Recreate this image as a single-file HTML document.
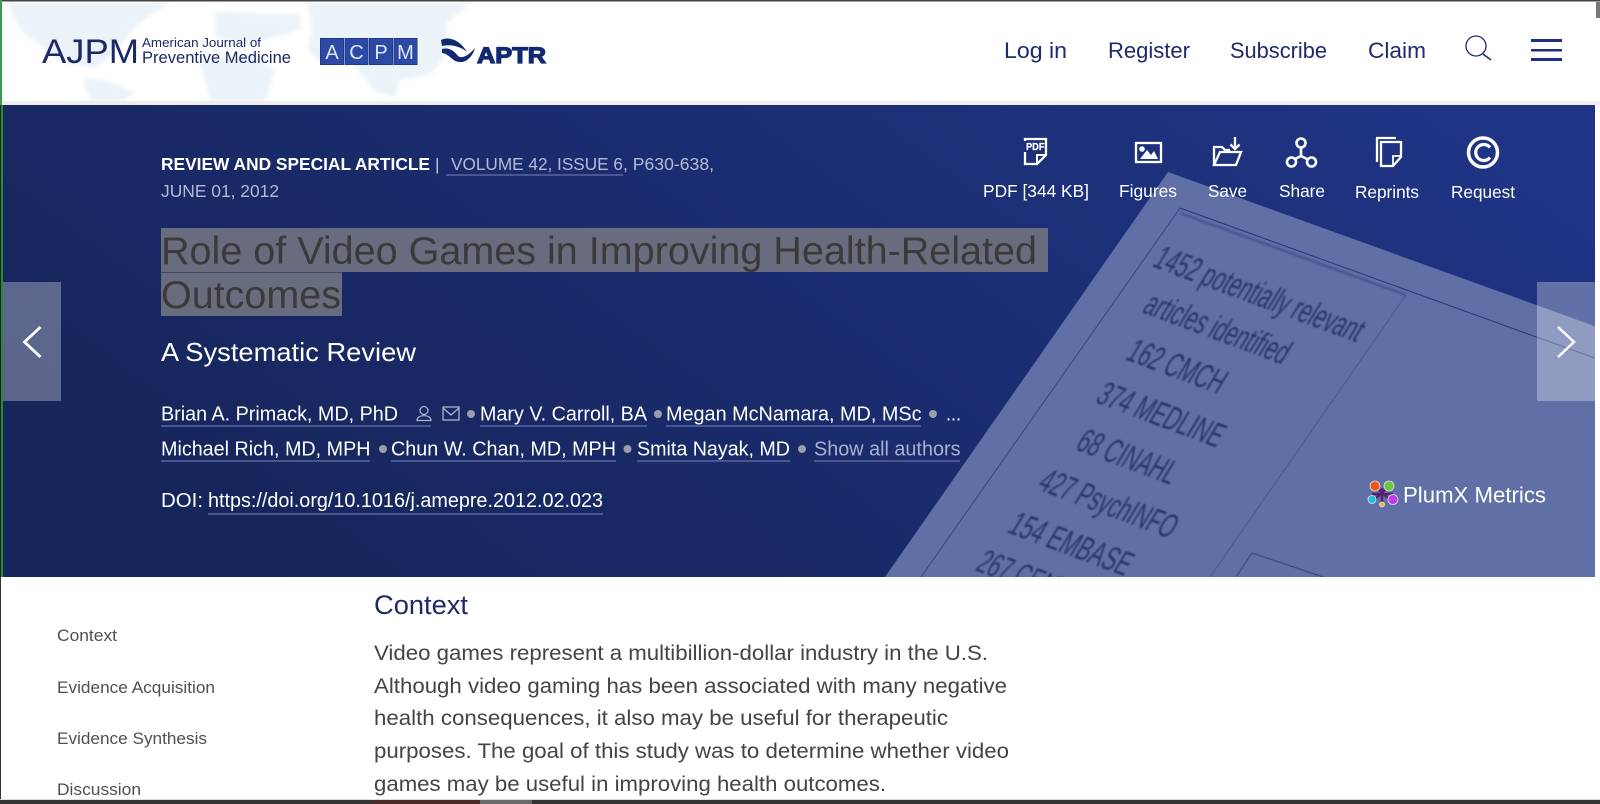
<!DOCTYPE html>
<html lang="en"><head><meta charset="utf-8"><title>Role of Video Games in Improving Health-Related Outcomes</title>
<style>html,body{margin:0;padding:0;background:#fff;width:1600px;height:804px;overflow:hidden}svg{display:block}text{font-family:"Liberation Sans",Arial,sans-serif;white-space:pre}</style></head><body>
<svg xmlns="http://www.w3.org/2000/svg" width="1600" height="804" viewBox="0 0 1600 804">
<defs>
<linearGradient id="hg" x1="0" y1="0.6" x2="1" y2="0.2"><stop offset="0" stop-color="#16255a"/><stop offset="1" stop-color="#1f3485"/></linearGradient>
<clipPath id="hc"><rect x="3" y="105" width="1592" height="472"/></clipPath>
<filter id="bl" x="-10%" y="-50%" width="120%" height="200%"><feGaussianBlur stdDeviation="0.9"/></filter>
<filter id="mb" x="-5%" y="-5%" width="110%" height="110%"><feGaussianBlur stdDeviation="2"/></filter>
</defs>
<rect width="1600" height="804" fill="#fff"/>
<!-- map -->
<g fill="#ebf3f8" filter="url(#mb)">
<path d="M8,3H170L150,15L135,28L120,45L105,60L95,68L85,66L60,62L40,45L25,35L12,15Z"/>
<path d="M82,78L105,80L135,92L125,101H90Z"/>
<path d="M215,12L300,14V30L265,40L240,42L215,38Z"/>
<path d="M200,60L250,55L275,70L265,101H210Z"/>
<path d="M307,3H470L445,25L450,50L430,75L400,80L395,97L375,92L350,60L325,66L307,50L312,30Z"/>
</g>
<rect x="0" y="0" width="1600" height="1.500" fill="#444"/>
<rect x="0" y="101" width="1600" height="4" fill="#eeeeee"/>
<!-- logo -->
<text x="42" y="63" font-size="34" fill="#1b2a66" textLength="97" lengthAdjust="spacingAndGlyphs">AJPM</text>
<text x="142" y="47" font-size="13" fill="#1b2a66" textLength="119" lengthAdjust="spacingAndGlyphs">American Journal of</text>
<text x="142" y="63" font-size="17" fill="#1b2a66" textLength="149" lengthAdjust="spacingAndGlyphs">Preventive Medicine</text>
<g fill="#2c4aa5" stroke="#1f3a8c" stroke-width="1">
<rect x="320.500" y="38.500" width="23" height="26"/><rect x="345" y="38.500" width="23" height="26"/><rect x="369.500" y="38.500" width="23" height="26"/><rect x="394" y="38.500" width="23" height="26"/></g>
<g fill="#dfe6f5" font-size="20" text-anchor="middle"><text x="332" y="59">A</text><text x="356.500" y="59">C</text><text x="381" y="59">P</text><text x="405.500" y="59">M</text></g>
<path d="M441,40C449,36 460,40 467,52C460,46 450,44 442,46Z" fill="#10296f"/>
<path d="M442,49C450,47 455,52 458,56C462,59 468,56 475,48C473,56 466,63 460,62C452,62 450,54 442,53Z" fill="#10296f"/>
<text x="477" y="63" font-size="22" font-weight="bold" fill="#10296f" stroke="#10296f" stroke-width="1.200" textLength="69" lengthAdjust="spacingAndGlyphs">APTR</text>
<!-- nav -->
<g font-size="22.500" fill="#1d2a6b">
<text x="1004" y="58" textLength="63" lengthAdjust="spacingAndGlyphs">Log in</text>
<text x="1108" y="58" textLength="82" lengthAdjust="spacingAndGlyphs">Register</text>
<text x="1230" y="58" textLength="97" lengthAdjust="spacingAndGlyphs">Subscribe</text>
<text x="1368" y="58" textLength="58" lengthAdjust="spacingAndGlyphs">Claim</text>
</g>
<circle cx="1476" cy="46" r="10" fill="none" stroke="#1d2a6b" stroke-width="1.300"/>
<path d="M1483,54L1491,60" stroke="#1d2a6b" stroke-width="1.500"/>
<g fill="#1d2f7e"><rect x="1531" y="39" width="31" height="3"/><rect x="1531" y="49" width="31" height="2.500"/><rect x="1531" y="58" width="31" height="3"/></g>
<!-- hero -->
<rect x="3" y="105" width="1592" height="472" fill="url(#hg)"/>
<g clip-path="url(#hc)">
<path d="M1168,172L1600,328V577H885Z" fill="#6070a6"/>
<path d="M1180,208L1600,360" stroke="#24367f" stroke-width="1" fill="none"/>
<path d="M1180,208L921,577" stroke="#34458a" stroke-width="1" fill="none"/>
<path d="M1180,213L1406,295" stroke="#3a4a88" stroke-width="3" fill="none" opacity=".6" filter="url(#bl)"/>
<path d="M1406,295L1210,577" stroke="#4c5c96" stroke-width="1.200" fill="none"/>
<path d="M1236,577L1252,553L1323,577" stroke="#3a4a88" stroke-width="1.200" fill="none"/>
<g fill="#27356c" font-size="37" filter="url(#bl)">
<text transform="matrix(.94,.35,-.5,.82,1151,266)" textLength="218" lengthAdjust="spacingAndGlyphs">1452 potentially relevant</text>
<text transform="matrix(.94,.35,-.5,.82,1141,312)" textLength="150" lengthAdjust="spacingAndGlyphs">articles identified</text>
<text transform="matrix(.94,.35,-.5,.82,1124,359)" textLength="100" lengthAdjust="spacingAndGlyphs">162 CMCH</text>
<text transform="matrix(.94,.35,-.5,.82,1094,402)" textLength="130" lengthAdjust="spacingAndGlyphs">374 MEDLINE</text>
<text transform="matrix(.94,.35,-.5,.82,1074,449)" textLength="102" lengthAdjust="spacingAndGlyphs">68 CINAHL</text>
<text transform="matrix(.94,.35,-.5,.82,1036,489)" textLength="142" lengthAdjust="spacingAndGlyphs">427 PsychINFO</text>
<text transform="matrix(.94,.35,-.5,.82,1006,532)" textLength="126" lengthAdjust="spacingAndGlyphs">154 EMBASE</text>
<text transform="matrix(.94,.35,-.5,.82,974,570)" textLength="130" lengthAdjust="spacingAndGlyphs">267 CENTRAL</text>
</g>
</g>
<rect x="3" y="282" width="58" height="119" fill="#fff" opacity=".3"/>
<rect x="1537" y="282" width="58" height="119" fill="#fff" opacity=".3"/>
<path d="M40.500,327L24.500,342L40.500,357" fill="none" stroke="#fff" stroke-width="2.800"/>
<path d="M1558,327L1574,342L1558,357" fill="none" stroke="#fff" stroke-width="2.500"/>
<!-- meta -->
<text x="161" y="170" font-size="17.500" font-weight="bold" fill="#fff" textLength="269" lengthAdjust="spacingAndGlyphs">REVIEW AND SPECIAL ARTICLE</text>
<text x="435" y="170" font-size="17" fill="#c8cee2">|</text>
<text x="451" y="170" font-size="17.500" fill="#b3bad6" textLength="172" lengthAdjust="spacingAndGlyphs">VOLUME 42, ISSUE 6</text>
<text x="623" y="170" font-size="17.500" fill="#b3bad6" textLength="91" lengthAdjust="spacingAndGlyphs">, P630-638,</text>
<rect x="446" y="174" width="177" height="2" fill="#4a5690"/>
<text x="161" y="197" font-size="17.500" fill="#b3bad6" textLength="118" lengthAdjust="spacingAndGlyphs">JUNE 01, 2012</text>
<!-- title -->
<rect x="161" y="228" width="887" height="44" fill="#696c7e"/>
<rect x="161" y="272.500" width="181" height="43.500" fill="#696c7e"/>
<text x="161" y="264" font-size="38.500" fill="#3b3a3a" textLength="876" lengthAdjust="spacingAndGlyphs">Role of Video Games in Improving Health-Related</text>
<text x="161" y="308" font-size="38.500" fill="#3b3a3a" textLength="180" lengthAdjust="spacingAndGlyphs">Outcomes</text>
<text x="161" y="361" font-size="26" fill="#fff" textLength="255" lengthAdjust="spacingAndGlyphs">A Systematic Review</text>
<!-- authors -->
<g font-size="20" fill="#fff">
<text x="161" y="420.500" textLength="237" lengthAdjust="spacingAndGlyphs">Brian A. Primack, MD, PhD</text>
<text x="480" y="420.500" textLength="167" lengthAdjust="spacingAndGlyphs">Mary V. Carroll, BA</text>
<text x="666" y="420.500" textLength="255.500" lengthAdjust="spacingAndGlyphs">Megan McNamara, MD, MSc</text>
<text x="946" y="420.500" textLength="15" lengthAdjust="spacingAndGlyphs">...</text>
<text x="161" y="455.500" textLength="209.500" lengthAdjust="spacingAndGlyphs">Michael Rich, MD, MPH</text>
<text x="391" y="455.500" textLength="225" lengthAdjust="spacingAndGlyphs">Chun W. Chan, MD, MPH</text>
<text x="637" y="455.500" textLength="153" lengthAdjust="spacingAndGlyphs">Smita Nayak, MD</text>
<text x="814" y="455.500" fill="#a9b1cf" textLength="146.500" lengthAdjust="spacingAndGlyphs">Show all authors</text>
<text x="161" y="507" textLength="42" lengthAdjust="spacingAndGlyphs">DOI:</text>
<text x="208" y="507" textLength="395" lengthAdjust="spacingAndGlyphs">https://doi.org/10.1016/j.amepre.2012.02.023</text>
</g>
<g fill="#4a5690">
<rect x="161" y="425" width="270" height="2"/><rect x="480" y="425" width="167" height="2"/><rect x="666" y="425" width="255" height="2"/>
<rect x="161" y="460" width="209" height="2"/><rect x="391" y="460" width="225" height="2"/><rect x="637" y="460" width="153" height="2"/><rect x="814" y="460" width="146" height="2"/>
<rect x="208" y="513" width="395" height="2"/></g>
<g fill="#9a9ea8"><circle cx="471" cy="414" r="4"/><circle cx="658" cy="414" r="4"/><circle cx="933" cy="414" r="4"/><circle cx="383" cy="449" r="4"/><circle cx="627.500" cy="449" r="4"/><circle cx="802" cy="449" r="4"/></g>
<g fill="none" stroke="#a9b1cf" stroke-width="1.300"><circle cx="424" cy="410.500" r="4"/><path d="M417,420.500C417,414 431,414 431,420.500Z"/><rect x="443" y="407" width="16" height="13"/><path d="M443,408L451,415L459,408"/></g>
<!-- icons -->
<g fill="none" stroke="#fff" stroke-width="2.300">
<path d="M1025,152V164H1037L1046,155V139H1025V141"/><path d="M1037,164V155H1046" stroke-width="2"/>
<rect x="1136" y="143" width="25" height="19"/>
<path d="M1214,165V147H1222L1225,150H1230"/><path d="M1214,165H1236L1241,152H1220Z" stroke-linejoin="miter"/>
<path d="M1235,137V149M1230.500,144.500L1235,149L1239.500,144.500"/>
<circle cx="1301" cy="143" r="4.500" stroke-width="2.600"/><circle cx="1291.500" cy="162" r="4.500" stroke-width="2.600"/><circle cx="1311.500" cy="162" r="4.500" stroke-width="2.600"/><path d="M1301,148V156L1295,159M1301,156L1307,159" stroke-width="2.600"/>
<path d="M1377,162V138H1396"/><path d="M1381,142H1401V157L1393,166H1381Z"/><path d="M1393,166V156H1401" stroke-width="1.800"/>
<circle cx="1483" cy="152.500" r="14.500" stroke-width="3.500"/><path d="M1490,147.500A8,8 0 1 0 1490,157.500" stroke-width="3.200"/>
</g>
<text x="1026" y="150" font-size="10" font-weight="bold" fill="#fff" stroke="#fff" stroke-width=".3" textLength="18.500" lengthAdjust="spacingAndGlyphs">PDF</text>
<circle cx="1142" cy="149" r="2.800" fill="#fff"/><path d="M1140,159L1147,150L1151,155L1154,151L1158,159Z" fill="#fff"/>
<g font-size="17.500" fill="#fff">
<text x="983" y="197" textLength="106" lengthAdjust="spacingAndGlyphs">PDF [344 KB]</text>
<text x="1119" y="197" textLength="58" lengthAdjust="spacingAndGlyphs">Figures</text>
<text x="1208" y="197" textLength="39" lengthAdjust="spacingAndGlyphs">Save</text>
<text x="1279" y="197" textLength="46" lengthAdjust="spacingAndGlyphs">Share</text>
<text x="1355" y="198" textLength="64" lengthAdjust="spacingAndGlyphs">Reprints</text>
<text x="1451" y="198" textLength="64" lengthAdjust="spacingAndGlyphs">Request</text>
</g>
<!-- plum -->
<path d="M1375,486L1389,499M1389,486L1375,499M1372,494H1393M1382,488V503" stroke="#5a2070" stroke-width="2.500"/>
<g stroke="#dfe3f0" stroke-width=".8"><circle cx="1375" cy="486" r="5" fill="#f4580f"/><circle cx="1389" cy="486" r="5" fill="#6cc73c"/><circle cx="1372" cy="499.500" r="4" fill="#22b8ea"/><circle cx="1393" cy="499.500" r="5" fill="#c23be8"/><circle cx="1382" cy="504.500" r="2.500" fill="#f6b91e"/></g>
<text x="1403" y="502.500" font-size="22" fill="#fff" textLength="143" lengthAdjust="spacingAndGlyphs">PlumX Metrics</text>
<!-- content -->
<g font-size="16.500" fill="#505050">
<text x="57" y="641" textLength="60" lengthAdjust="spacingAndGlyphs">Context</text>
<text x="57" y="693" textLength="158" lengthAdjust="spacingAndGlyphs">Evidence Acquisition</text>
<text x="57" y="744" textLength="150" lengthAdjust="spacingAndGlyphs">Evidence Synthesis</text>
<text x="57" y="795" textLength="84" lengthAdjust="spacingAndGlyphs">Discussion</text>
</g>
<text x="374" y="614" font-size="27" fill="#1f2a63" textLength="94" lengthAdjust="spacingAndGlyphs">Context</text>
<g font-size="21.500" fill="#444">
<text x="374" y="660" textLength="614" lengthAdjust="spacingAndGlyphs">Video games represent a multibillion-dollar industry in the U.S.</text>
<text x="374" y="693" textLength="633" lengthAdjust="spacingAndGlyphs">Although video gaming has been associated with many negative</text>
<text x="374" y="725" textLength="574" lengthAdjust="spacingAndGlyphs">health consequences, it also may be useful for therapeutic</text>
<text x="374" y="758" textLength="635" lengthAdjust="spacingAndGlyphs">purposes. The goal of this study was to determine whether video</text>
<text x="374" y="791" textLength="512" lengthAdjust="spacingAndGlyphs">games may be useful in improving health outcomes.</text>
</g>
<!-- edges -->
<rect x="0" y="0" width="2" height="105" fill="#3c9a4c"/>
<rect x="0" y="105" width="1" height="472" fill="#222"/><rect x="1" y="105" width="2" height="472" fill="#2a8a3a"/>
<rect x="0" y="577" width="1" height="227" fill="#333"/>
<rect x="1596" y="2" width="4" height="16" fill="#777"/>
<rect x="0" y="799" width="1600" height="1" fill="#ddd"/>
<rect x="0" y="800" width="1600" height="4" fill="#333"/>
<rect x="372" y="800" width="108" height="4" fill="#4a2a28"/>
<rect x="480" y="800" width="52" height="4" fill="#6a6a6a"/>
</svg>
</body></html>
